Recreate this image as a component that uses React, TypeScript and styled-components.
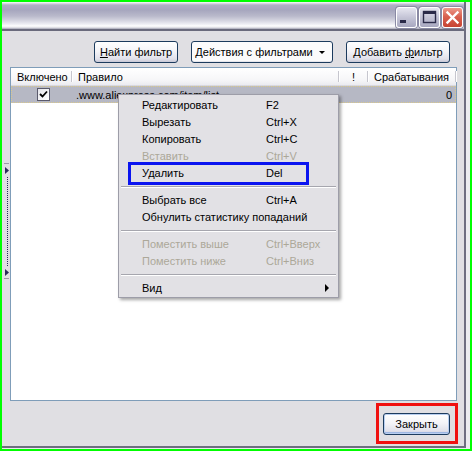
import React from 'react';
import styled, { createGlobalStyle, css } from 'styled-components';

const GlobalStyle = createGlobalStyle`
  html, body { margin: 0; padding: 0; background: #fff; }
  body {
    font-family: "Liberation Sans", Arial, sans-serif;
    font-size: 11px;
    color: #000;
  }
  * { box-sizing: border-box; }
`;

const Frame = styled.div`
  position: relative;
  width: 472px;
  height: 451px;
  border: 2px solid #00ff00;
  background: #ececf0;
  padding: 0 4px 1px 0;
  display: flex;
  overflow: hidden;
`;

const Shell = styled.div`
  flex: 1;
  display: flex;
  flex-direction: column;
  border-right: 2px solid #6e6e80;
  border-bottom: 2px solid #6e6e80;
  background: #e0dfe3;
`;

const TitleBar = styled.div`
  height: 29px;
  flex: none;
  display: flex;
  justify-content: flex-end;
  align-items: flex-start;
  gap: 2px;
  padding: 5px 1px 0 0;
  border-bottom: 2px solid #6a6a7c;
  background: linear-gradient(
    to bottom,
    #fbfbfd 0px,
    #e4e4ec 1px,
    #b0b0c6 3px,
    #a6a6be 8px,
    #b9b9cb 14px,
    #d7d7e2 19px,
    #f4f4f8 23px,
    #ffffff 24px,
    #d4d4dc 26px,
    #9a9aac 27px
  );
`;

const CaptionButton = styled.div<{ $close?: boolean }>`
  width: 21px;
  height: 21px;
  border-radius: 3px;
  border: 1px solid #fff;
  box-shadow: 0 0 0 1px #8a8aa4;
  display: flex;
  align-items: center;
  justify-content: center;
  background: ${(p) =>
    p.$close
      ? 'linear-gradient(to bottom, #ec9a8c 0%, #d9604f 45%, #c74433 100%)'
      : 'linear-gradient(to bottom, #e6e6f0 0%, #c4c4d6 50%, #a8a8c0 100%)'};
`;

const Body = styled.div`
  flex: 1;
  display: flex;
  flex-direction: column;
`;

const ButtonBar = styled.div`
  display: flex;
  justify-content: flex-end;
  gap: 13px;
  margin-top: 10px;
  padding-right: 14px;
`;

const XpButton = styled.div<{ $w: number; $flat?: boolean; $default?: boolean }>`
  width: ${(p) => p.$w}px;
  height: 22px;
  border: 1px solid #1c3b5e;
  border-radius: 3px;
  display: flex;
  align-items: center;
  justify-content: center;
  white-space: nowrap;
  ${(p) =>
    p.$flat
      ? css`
          background: #fbfbfc;
          box-shadow: inset 0 -1px 0 #e6e6ec;
        `
      : css`
          background: linear-gradient(to bottom, #ffffff 0%, #f4f4f8 45%, #e0e0ea 85%, #c8c8d6 100%);
        `}
  ${(p) =>
    p.$default &&
    css`
      box-shadow: inset 0 0 0 1px #b8cef0, inset 0 -2px 0 #9db6e2;
    `}
`;

const DropArrow = styled.span`
  width: 0;
  height: 0;
  margin-left: 6px;
  margin-right: 4px;
  border-left: 3px solid transparent;
  border-right: 3px solid transparent;
  border-top: 3px solid #000;
`;

const ListRow = styled.div`
  flex: 1;
  display: flex;
  margin-top: 4px;
  padding-right: 7px;
`;

const Splitter = styled.div`
  width: 8px;
  flex: none;
  padding-top: 94px;
`;

const ListView = styled.div`
  flex: 1;
  border: 1px solid #7f9db9;
  background: #fff;
`;

const cols = '61px 267px 29px 1fr';

const Header = styled.div`
  display: grid;
  grid-template-columns: ${cols};
  height: 18px;
  background: linear-gradient(to bottom, #ffffff 0%, #f6f6f8 70%, #ebebf0 100%);
  border-bottom: 1px solid #d8d8e0;
`;

const HeaderCell = styled.div<{ $center?: boolean }>`
  position: relative;
  display: flex;
  align-items: center;
  justify-content: ${(p) => (p.$center ? 'center' : 'flex-start')};
  padding-left: ${(p) => (p.$center ? 0 : 6)}px;
  &::after {
    content: '';
    position: absolute;
    right: 0;
    top: 3px;
    bottom: 3px;
    width: 1px;
    background: #c6c6ce;
    box-shadow: 1px 0 0 #fff;
  }
`;

const Row = styled.div`
  display: grid;
  grid-template-columns: ${cols};
  height: 17px;
  background: #b6b8c4;
  border: 1px dotted #d9c98e;
`;

const Cell = styled.div<{ $align?: 'left' | 'right'; $pad?: number }>`
  display: flex;
  align-items: center;
  justify-content: ${(p) => (p.$align === 'right' ? 'flex-end' : 'flex-start')};
  padding: 0 ${(p) => (p.$align === 'right' ? p.$pad ?? 0 : 0)}px 0
    ${(p) => (p.$align === 'right' ? 0 : p.$pad ?? 0)}px;
  white-space: nowrap;
  overflow: hidden;
`;

const CheckBox = styled.div`
  width: 13px;
  height: 13px;
  margin-left: 25px;
  border: 1px solid #5a5a6c;
  background: linear-gradient(135deg, #e4e4ea 0%, #ffffff 100%);
  display: flex;
  align-items: center;
  justify-content: center;
`;

const Footer = styled.div`
  display: flex;
  justify-content: flex-end;
  padding: 12px 14px 11px 0;
`;

const Menu = styled.div`
  position: absolute;
  left: 116px;
  top: 92px;
  width: 221px;
  padding: 1px;
  background: #e2e1e5;
  border: 1px solid #9d9da8;
  box-shadow: 2px 2px 3px rgba(0, 0, 0, 0.35);
`;

const MenuItem = styled.div<{ $disabled?: boolean }>`
  position: relative;
  display: grid;
  grid-template-columns: 124px 1fr;
  height: 17px;
  align-items: center;
  padding-left: 22px;
  white-space: nowrap;
  color: ${(p) => (p.$disabled ? '#aca899' : '#000')};
`;

const SubArrow = styled.span`
  position: absolute;
  right: 8px;
  top: 5px;
  width: 0;
  height: 0;
  border-top: 4px solid transparent;
  border-bottom: 4px solid transparent;
  border-left: 4px solid #000;
`;

const MenuSeparator = styled.div`
  height: 10px;
  display: flex;
  align-items: center;
  padding: 0 1px;
  &::before {
    content: '';
    flex: 1;
    height: 1px;
    background: #a6a6ae;
    box-shadow: 0 1px 0 #fff;
  }
`;

const Mark = styled.div<{ $color: string; $l: number; $t: number; $w: number; $h: number }>`
  position: absolute;
  left: ${(p) => p.$l}px;
  top: ${(p) => p.$t}px;
  width: ${(p) => p.$w}px;
  height: ${(p) => p.$h}px;
  border: 3px solid ${(p) => p.$color};
  pointer-events: none;
`;

type Item =
  | { sep: true }
  | { label: string; key?: string; disabled?: boolean; sub?: boolean };

const menuItems: Item[] = [
  { label: 'Редактировать', key: 'F2' },
  { label: 'Вырезать', key: 'Ctrl+X' },
  { label: 'Копировать', key: 'Ctrl+C' },
  { label: 'Вставить', key: 'Ctrl+V', disabled: true },
  { label: 'Удалить', key: 'Del' },
  { sep: true },
  { label: 'Выбрать все', key: 'Ctrl+A' },
  { label: 'Обнулить статистику попаданий' },
  { sep: true },
  { label: 'Поместить выше', key: 'Ctrl+Вверх', disabled: true },
  { label: 'Поместить ниже', key: 'Ctrl+Вниз', disabled: true },
  { sep: true },
  { label: 'Вид', sub: true },
];

const SplitterGlyph = () => {
  const dots = [];
  for (let y = 16; y < 106; y += 2) dots.push(<rect key={y} x={5} y={y} width={1} height={1} fill="#2c2c5c" />);
  return (
    <svg width="8" height="120" style={{ display: 'block' }}>
      <rect x={2} y={2} width={5} height={1} fill="#9a9aa8" />
      <polygon points="3,6 7,9.5 3,13" fill="#2c2c5c" />
      {dots}
      <polygon points="3,108 7,111.5 3,115" fill="#2c2c5c" />
      <rect x={2} y={117} width={5} height={1} fill="#9a9aa8" />
    </svg>
  );
};

export default function App() {
  return (
    <>
      <GlobalStyle />
      <Frame>
        <Shell>
          <TitleBar>
            <CaptionButton>
              <svg width="19" height="19">
                <rect x={3} y={12} width={6} height={3} fill="#2a2a48" />
              </svg>
            </CaptionButton>
            <CaptionButton>
              <svg width="19" height="19">
                <rect x={3.5} y={3.5} width={12} height={11} fill="none" stroke="#2a2a48" strokeWidth={1.4} />
                <rect x={3} y={3} width={13} height={3} fill="#2a2a48" />
              </svg>
            </CaptionButton>
            <CaptionButton $close>
              <svg width="19" height="19">
                <path d="M4.5 4.5 L14.5 14.5 M14.5 4.5 L4.5 14.5" stroke="#fff" strokeWidth={2.4} strokeLinecap="square" />
              </svg>
            </CaptionButton>
          </TitleBar>
          <Body>
            <ButtonBar>
              <XpButton $w={84}>
                <span><u>Н</u>айти фильтр</span>
              </XpButton>
              <XpButton $w={142} $flat>
                <span>Действия с фильтрами</span>
                <DropArrow />
              </XpButton>
              <XpButton $w={104}>
                <span>Добавить <u>ф</u>ильтр</span>
              </XpButton>
            </ButtonBar>
            <ListRow>
              <Splitter>
                <SplitterGlyph />
              </Splitter>
              <ListView>
                <Header>
                  <HeaderCell>Включено</HeaderCell>
                  <HeaderCell>Правило</HeaderCell>
                  <HeaderCell $center>!</HeaderCell>
                  <HeaderCell>Срабатывания</HeaderCell>
                </Header>
                <Row>
                  <Cell>
                    <CheckBox>
                      <svg width="9" height="9">
                        <path d="M1 4 L3.5 6.5 L8 1.5" stroke="#000" strokeWidth={1.8} fill="none" />
                      </svg>
                    </CheckBox>
                  </Cell>
                  <Cell $pad={3}>.www.aliexpress.com/item/list</Cell>
                  <Cell />
                  <Cell $align="right" $pad={3}>0</Cell>
                </Row>
              </ListView>
            </ListRow>
            <Footer>
              <XpButton $w={67} $default>
                <span>Закрыть</span>
              </XpButton>
            </Footer>
          </Body>
        </Shell>
        <Menu>
          {menuItems.map((it, i) =>
            'sep' in it ? (
              <MenuSeparator key={i} />
            ) : (
              <MenuItem key={i} $disabled={it.disabled}>
                <span>{it.label}</span>
                <span>{it.key}</span>
                {it.sub && <SubArrow />}
              </MenuItem>
            )
          )}
        </Menu>
        <Mark $color="#0a14f0" $l={126} $t={160} $w={181} $h={23} />
        <Mark $color="#f01010" $l={374} $t={401} $w={82} $h={41} />
      </Frame>
    </>
  );
}
